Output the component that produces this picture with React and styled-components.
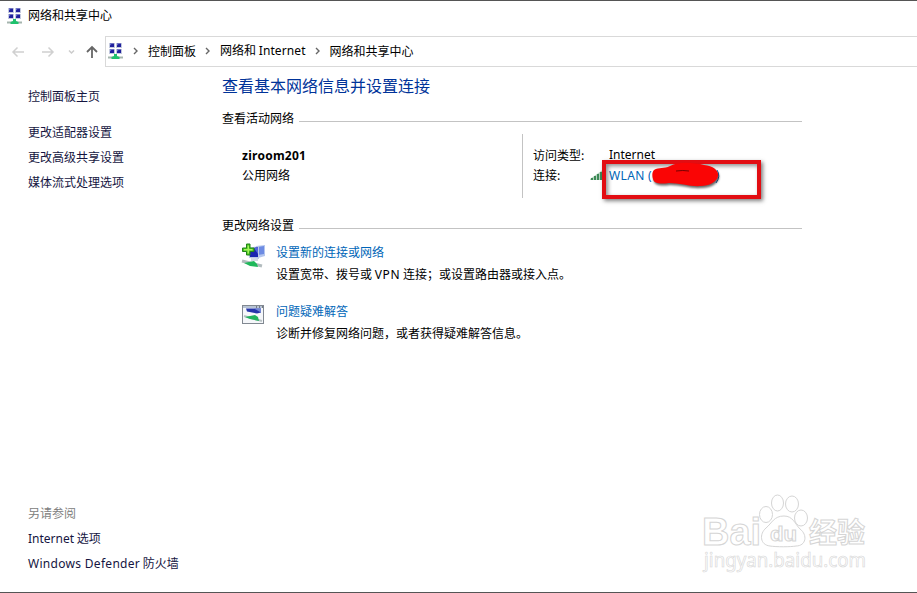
import React from 'react';
import styled, { createGlobalStyle } from 'styled-components';

const GlobalStyle = createGlobalStyle`
  * {
    box-sizing: border-box;
  }

  body {
    margin: 0;
    background: #fff;
    color: #000;
    font-family: 'Noto Sans CJK SC', sans-serif;
    font-size: 12px;
    line-height: 20px;
    overflow: hidden;
  }
`;

const Window = styled.div`
  display: flex;
  flex-direction: column;
  width: 917px;
  height: 593px;
  border-top: 1px solid #555;
  border-bottom: 1px solid #555;
`;

const TitleBar = styled.header`
  display: flex;
  align-items: center;
  height: 35px;
  padding: 0 7px 7px;
  gap: 5px;
`;

const NavBar = styled.nav`
  display: flex;
  height: 31px;
`;

const NavButtons = styled.div`
  display: flex;
  align-items: center;
  width: 105px;
  padding-left: 11px;
`;

const AddressBar = styled.div`
  display: flex;
  align-items: center;
  flex: 1;
  padding: 0 0 2px 2px;
  border: 1px solid #d9d9d9;
  border-right: none;
`;

const Crumb = styled.span`
  white-space: pre;
`;

const CrumbArrow = styled.svg`
  width: 5px;
  height: 8px;
  margin: 1px 10px 0 9px;
  fill: none;
  stroke: #666;
  stroke-width: 1.4;

  &:first-of-type {
    margin-left: 8px;
  }
`;

const NetworkGlyph = styled.svg`
  width: 16px;
  height: 17px;
  margin-top: 2px;
`;

const Latin = styled.span`
  font-family: 'Noto Sans', 'Open Sans', sans-serif;
  font-size: 12px;
  font-weight: ${props => (props.$bold ? 700 : 400)};
  letter-spacing: ${props => props.$spacing || 0}px;
`;

const Content = styled.div`
  display: flex;
  flex: 1;
`;

const Sidebar = styled.aside`
  display: flex;
  flex-direction: column;
  width: 222px;
  padding: 16px 0 17px 28px;
  line-height: 25px;
`;

const SideLink = styled.a`
  display: block;
  height: 25px;
  color: #15153f;
  white-space: pre;
`;

const TaskLinks = styled.div`
  margin-top: 11px;
`;

const SeeAlso = styled.div`
  margin-top: auto;
`;

const SeeAlsoTitle = styled.div`
  color: #808080;
`;

const Main = styled.main`
  width: 580px;
  padding-top: 6px;
`;

const PageTitle = styled.h1`
  margin: 0 0 11px;
  color: #003399;
  font-size: 16px;
  font-weight: 400;
  line-height: 24px;
`;

const SectionTitle = styled.h2`
  display: flex;
  align-items: center;
  gap: 5px;
  margin: 0;
  font-size: 12px;
  font-weight: 400;

  &::after {
    content: '';
    flex: 1;
    height: 1px;
    margin-top: 7px;
    background: #c3c3c3;
  }
`;

const ActiveNetwork = styled.section`
  display: flex;
  height: 64px;
  margin: 6px 0 17px;
`;

const NetworkName = styled.div`
  width: 301px;
  padding: 11px 0 0 20px;
  border-right: 1px solid #c3c3c3;
`;

const NetworkRow = styled.div`
  height: 20px;
`;

const NetworkDetails = styled.div`
  position: relative;
  flex: 1;
  padding: 11px 0 0 10px;
`;

const DetailRow = styled.div`
  display: flex;
  align-items: center;
  height: 20px;
`;

const DetailLabel = styled.span`
  width: 57px;
`;

const DetailIcon = styled.span`
  display: flex;
  width: 19px;
`;

const WlanLink = styled.a`
  color: #0066b8;
  white-space: pre;
`;

const Highlight = styled.div`
  position: absolute;
  left: 79px;
  top: 26px;
  width: 159px;
  height: 39px;
  border: 4px solid #e20d12;
  box-shadow: 2px 2px 4px rgba(0, 0, 0, 0.5),
    inset 2px 2px 4px rgba(0, 0, 0, 0.45);
`;

const Redaction = styled.svg`
  position: absolute;
  left: 126px;
  top: 26px;
  width: 80px;
  height: 34px;
`;

const Setting = styled.div`
  display: flex;
  height: 59px;
  padding: 6px 0 0 19px;
  line-height: 22px;
`;

const SettingIcon = styled.div`
  width: 35px;
  padding-top: ${props => props.$offset}px;
`;

const SettingLink = styled.a`
  display: block;
  color: #0066b8;
`;

const SettingText = styled.div`
  white-space: pre;
`;

const Watermark = styled.svg`
  position: absolute;
  left: 698px;
  top: 490px;
  width: 180px;
  height: 90px;
`;

const NetworkIcon = () => (
  <NetworkGlyph viewBox="0 0 16 17">
    {[[1, 0], [8, 0], [1, 6], [8, 6]].map(([x, y]) => (
      <g key={`${x}-${y}`}>
        <rect x={x} y={y} width="6" height="5" fill="#c3c9df" />
        <rect x={x + 1} y={y + 0.5} width="4" height="3.5" fill="#20209c" />
        <path d={`M${x + 1} ${y + 0.5}h2l-2 2z`} fill="#6f78d2" />
      </g>
    ))}
    <path d="M0 14.5h15" stroke="#a5b5ae" strokeWidth="2" />
    <path d="M6 11h3v2l2.500 1v2h-8v-2l2.500-1z" fill="#1fc16d" />
  </NetworkGlyph>
);

const NavIcons = () => (
  <svg width="90" height="16" viewBox="0 0 90 16" fill="none" strokeWidth="1.5">
    <path d="M13 8H2M6.500 3.500L2 8l4.500 4.500" stroke="#d0d0d0" />
    <path d="M31 8h11M37.500 3.500L42 8l-4.500 4.500" stroke="#d0d0d0" />
    <path d="M58 6.500l2.500 2.500L63 6.500" stroke="#ccc" />
    <path d="M81 14V3M76 8l5-5 5 5" stroke="#666" strokeWidth="1.800" />
  </svg>
);

const Arrow = () => (
  <CrumbArrow viewBox="0 0 5 8">
    <path d="M1 1l3 3-3 3" />
  </CrumbArrow>
);

const SignalIcon = () => (
  <svg width="15" height="12" viewBox="0 0 15 12">
    <path d="M0 10L14 0v11H0z" fill="#b5d3be" />
    {[1, 4, 7, 10, 13].map((x, i) => (
      <rect key={x} x={x} y={9 - i * 2} width="2" height={2 + i * 2} fill="#3d8a57" />
    ))}
  </svg>
);

const NewConnectionIcon = () => (
  <svg width="26" height="26" viewBox="0 0 26 26">
    <path d="M15 3l9-1v11l-7 2z" fill="#b4c6ee" />
    <path d="M17 4l6-1v8l-6 1z" fill="#6d8be3" />
    <path d="M7 5l11-2v13l-10-1z" fill="#bcc8e6" />
    <path d="M8 6l9-2v10l-8 0z" fill="#1b25b0" />
    <path d="M13 5l4-1v7z" fill="#5265dc" />
    <path d="M10 15l7 1v2h-7z" fill="#d3d9e5" />
    <path d="M1 18l8 2 12 3" stroke="#b2bbbe" strokeWidth="3" fill="none" />
    <path d="M3 20l10-2 3 3 1 3-8-1z" fill="#20b85b" />
    <path d="M5.500 1h3.500v4H13v3.500H9V12H5.500V8.500H1.500V5h4z" fill="#47c51e" stroke="#21831b" />
    <path d="M7.250 2.500v8M3 6.750h8.500" stroke="#a4f45b" strokeWidth="1.500" />
  </svg>
);

const TroubleshootIcon = () => (
  <svg width="24" height="21" viewBox="0 0 24 21">
    <rect x="1.500" y="1.500" width="21" height="18" fill="#f5f7fa" stroke="#818891" />
    <path d="M2 3h20" stroke="#b8c4d4" strokeWidth="2" />
    <path d="M15 3h1m2 0h1m2 0h1" stroke="#333" />
    <path d="M5 4.500h15v4l-4 1-10-2z" fill="#2434aa" />
    <path d="M13 4.500h7v4z" fill="#7186d4" />
    <path d="M3 12l7 2 11 3" stroke="#b8c1c4" strokeWidth="2" fill="none" />
    <path d="M4 13l10-2 3 2 1 4-9-2z" fill="#20b35c" />
  </svg>
);

const BaiduWatermark = () => (
  <Watermark viewBox="0 0 180 90" fill="#fff" stroke="#d5d5d5">
    <g fontFamily="'Liberation Sans', sans-serif" fontWeight="700">
      <text x="4" y="55" fontSize="38" textLength="59" lengthAdjust="spacingAndGlyphs">Bai</text>
      <text
        x="6"
        y="77"
        fontFamily="'Noto Sans', sans-serif"
        fontSize="19"
        fontWeight="400"
        strokeWidth="0.6"
        textLength="162"
        lengthAdjust="spacingAndGlyphs"
      >
        jingyan.baidu.com
      </text>
      <text x="111" y="53" fontFamily="'Noto Sans CJK SC', sans-serif" fontSize="28">经验</text>
    </g>
    <ellipse cx="68" cy="24.500" rx="6.500" ry="8" />
    <ellipse cx="79.500" cy="13" rx="6" ry="8" />
    <ellipse cx="94" cy="14" rx="6.500" ry="8" />
    <ellipse cx="103" cy="28" rx="6.500" ry="8" />
    <path d="M86 26c9 0 11 8 16 13 8 6 6 17-4 17-5 1-20 1-26 0-10-1-11-12-4-18 6-5 8-12 18-12z" />
    <text
      x="72"
      y="51"
      fontFamily="'Liberation Sans', sans-serif"
      fontSize="20"
      fontWeight="700"
      textLength="27"
      lengthAdjust="spacingAndGlyphs"
    >
      du
    </text>
  </Watermark>
);

const App = () => (
  <React.Fragment>
    <GlobalStyle />
    <Window>
      <TitleBar>
        <NetworkIcon />
        <span>网络和共享中心</span>
      </TitleBar>
      <NavBar>
        <NavButtons>
          <NavIcons />
        </NavButtons>
        <AddressBar>
          <NetworkIcon />
          <Arrow />
          <Crumb>控制面板</Crumb>
          <Arrow />
          <Crumb>
            网络和 <Latin $spacing={0.1}>Internet</Latin>
          </Crumb>
          <Arrow />
          <Crumb>网络和共享中心</Crumb>
        </AddressBar>
      </NavBar>
      <Content>
        <Sidebar>
          <SideLink>控制面板主页</SideLink>
          <TaskLinks>
            <SideLink>更改适配器设置</SideLink>
            <SideLink>更改高级共享设置</SideLink>
            <SideLink>媒体流式处理选项</SideLink>
          </TaskLinks>
          <SeeAlso>
            <SeeAlsoTitle>另请参阅</SeeAlsoTitle>
            <SideLink>
              <Latin>Internet</Latin> 选项
            </SideLink>
            <SideLink>
              <Latin $spacing={0.3}>Windows Defender</Latin> 防火墙
            </SideLink>
          </SeeAlso>
        </Sidebar>
        <Main>
          <PageTitle>查看基本网络信息并设置连接</PageTitle>
          <SectionTitle>查看活动网络</SectionTitle>
          <ActiveNetwork>
            <NetworkName>
              <NetworkRow>
                <Latin $bold $spacing={0.25}>ziroom201</Latin>
              </NetworkRow>
              <NetworkRow>公用网络</NetworkRow>
            </NetworkName>
            <NetworkDetails>
              <DetailRow>
                <DetailLabel>访问类型:</DetailLabel>
                <DetailIcon />
                <Latin>Internet</Latin>
              </DetailRow>
              <DetailRow>
                <DetailLabel>连接:</DetailLabel>
                <DetailIcon>
                  <SignalIcon />
                </DetailIcon>
                <WlanLink>
                  <Latin $spacing={0.35}>WLAN (</Latin>
                </WlanLink>
              </DetailRow>
              <Highlight />
              <Redaction viewBox="0 0 80 34">
                <path d="M68 10q4 6-1 13" stroke="#1765b5" fill="none" />
                <path
                  d="M5 10c5-3 10-1 16-4 9-5 25-3 34-1 10 1 15 6 14 11-1 6-9 10-17 10-10 1-21-3-32-3-8 1-15 1-16-4-1-3-1-7 1-9z"
                  fill="#fa0505"
                  filter="drop-shadow(1px 2px 1px rgba(0, 0, 0, 0.6))"
                />
                <path d="M27 11q7-1 13 0" stroke="#700" fill="none" />
              </Redaction>
            </NetworkDetails>
          </ActiveNetwork>
          <SectionTitle>更改网络设置</SectionTitle>
          <Setting>
            <SettingIcon $offset={2}>
              <NewConnectionIcon />
            </SettingIcon>
            <div>
              <SettingLink>设置新的连接或网络</SettingLink>
              <SettingText>
                设置宽带、拨号或 <Latin $spacing={0.7}>VPN</Latin> 连接；或设置路由器或接入点。
              </SettingText>
            </div>
          </Setting>
          <Setting>
            <SettingIcon $offset={4}>
              <TroubleshootIcon />
            </SettingIcon>
            <div>
              <SettingLink>问题疑难解答</SettingLink>
              <SettingText>诊断并修复网络问题，或者获得疑难解答信息。</SettingText>
            </div>
          </Setting>
        </Main>
      </Content>
      <BaiduWatermark />
    </Window>
  </React.Fragment>
);

export default App;
